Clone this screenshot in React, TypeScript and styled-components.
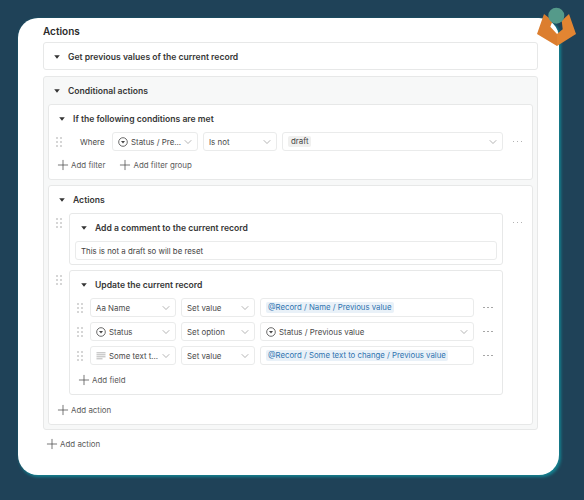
import React from "react";
import styled, { createGlobalStyle } from "styled-components";
import { ChevronDown, Plus } from "lucide-react";

const Global = createGlobalStyle`
  html, body { margin: 0; padding: 0; height: 500px; background: #1f4258; overflow: hidden; }
  body { font-family: Inter, "Liberation Sans", sans-serif; color: #333; }
  #root { padding: 18px 0 0 18px; box-sizing: border-box; }
`;

const Card = styled.main`
  position: relative;
  box-sizing: border-box;
  width: 541px;
  height: 457px;
  padding: 6px 21px 0 25px;
  background: #fff;
  border-radius: 20px;
  box-shadow: 1.5px 1.5px 3px #14808f;
`;

const Logo = styled.svg`
  position: absolute;
  left: 518px;
  top: -11px;
`;

const PageTitle = styled.h2`
  margin: 0 0 4px;
  font-size: 10px;
  line-height: 14px;
  font-weight: 600;
  color: #2b2b2b;
`;

const Stack = styled.div<{ $gap: number }>`
  display: flex;
  flex-direction: column;
  gap: ${(p) => p.$gap}px;
`;

const Panel = styled.section<{ $grey?: boolean; $inset?: boolean }>`
  box-sizing: border-box;
  background: ${(p) => (p.$grey ? "#f7f8f8" : "#fff")};
  border: 1px solid #e7e8e8;
  border-radius: 3px;
  padding: ${(p) => (p.$inset ? "0 4px 4px" : "0")};
`;

const Header = styled.div<{ $indent?: number; $short?: boolean }>`
  box-sizing: border-box;
  display: flex;
  align-items: center;
  gap: 8px;
  height: ${(p) => (p.$short ? 26 : 27)}px;
  padding-top: ${(p) => (p.$short ? 1 : 0)}px;
  padding-left: ${(p) => p.$indent ?? 10}px;
  font-size: 8.6px;
  font-weight: 600;
  color: #363636;
`;

const Row = styled.div`
  display: flex;
  align-items: center;
  height: 19px;
`;

const NestedRow = styled.div`
  display: flex;
  align-items: flex-start;
`;

const GripCell = styled.div`
  width: 20px;
  height: 19px;
  flex: none;
  display: flex;
  align-items: center;
  justify-content: center;
  color: #8d8d8d;
`;

const WhereLabel = styled.span`
  width: 43px;
  flex: none;
  box-sizing: border-box;
  padding-left: 11px;
  font-size: 7.9px;
  color: #4a4a4a;
`;

const Fields = styled.div`
  display: flex;
  gap: 5px;
  flex: none;
`;

const Field = styled.div<{ $w: number }>`
  box-sizing: border-box;
  width: ${(p) => p.$w}px;
  flex: none;
  height: 19px;
  display: flex;
  align-items: center;
  gap: 3px;
  padding: 0 5px;
  border: 1px solid #eaebeb;
  border-radius: 3px;
  background: #fff;
  font-size: 7.9px;
  color: #4a4a4a;
  white-space: nowrap;
`;

const FieldText = styled.span`
  flex: 1;
  min-width: 0;
`;

const Chevron = styled(ChevronDown)`
  flex: none;
  margin-right: -2px;
  color: #8b8b8b;
`;

const Token = styled.span`
  padding: 1px 2px;
  border-radius: 2px;
  background: #e9f1f8;
  color: #2f74b0;
  font-size: 7.8px;
  line-height: 9px;
`;

const Tag = styled.span`
  display: inline-block;
  padding: 1px 3px;
  border-radius: 2px;
  background: #f0f0ef;
  color: #444;
  font-size: 7.9px;
  line-height: 9px;
`;

const More = styled.div`
  flex: 1;
  height: 19px;
  display: flex;
  align-items: center;
  justify-content: center;
  gap: 2.3px;
  & > i { width: 1.7px; height: 1.7px; border-radius: 50%; background: #9a9a9a; display: block; }
`;

const AddRow = styled.div<{ $h: number; $pl: number }>`
  display: flex;
  align-items: center;
  gap: 15px;
  height: ${(p) => p.$h}px;
  padding-left: ${(p) => p.$pl}px;
`;

const AddButton = styled.span`
  display: inline-flex;
  align-items: center;
  gap: 3.7px;
  font-size: 7.9px;
  color: #5a5a5a;
  svg { color: #444; flex: none; margin: 0 -3.3px; }
`;

const CommentInput = styled.div`
  box-sizing: border-box;
  height: 19px;
  margin: 0 5px 4px;
  padding: 0 5px;
  display: flex;
  align-items: center;
  border: 1px solid #eaebeb;
  border-radius: 3px;
  font-size: 7.85px;
  color: #3f3f3f;
`;

const Body = styled.div`
  display: flex;
  flex-direction: column;
  gap: 5px;
`;

const NestedPanel = styled(Panel)`
  width: 434px;
  flex: none;
`;

const Caret = () => (
  <svg width="6" height="4" viewBox="0 0 6 4" style={{ flex: "none" }}>
    <path d="M0.2 0.3h5.6L3 3.8z" fill="#333" />
  </svg>
);

const Grip = () => (
  <svg width="6" height="10" viewBox="0 0 6 10" fill="currentColor">
    {[1, 5, 9].flatMap((y) => [1, 5].map((x) => <circle key={`${x}-${y}`} cx={x} cy={y} r="0.7" />))}
  </svg>
);

const StatusIcon = () => (
  <svg width="10" height="10" viewBox="0 0 10 10" style={{ flex: "none" }}>
    <circle cx="5" cy="5" r="4.3" fill="none" stroke="#444" strokeWidth="0.8" />
    <path d="M3 4h4L5 6.6z" fill="#444" />
  </svg>
);

const TextIcon = () => (
  <svg width="10" height="8" viewBox="0 0 10 8" style={{ flex: "none" }}>
    <path d="M.5 .8h9M.5 2.8h9M.5 4.8h9M.5 6.8h6" stroke="#777" strokeWidth="0.55" />
  </svg>
);

const Dots = () => (
  <More>
    <i />
    <i />
    <i />
  </More>
);

const Add = ({ label }: { label: string }) => (
  <AddButton>
    <Plus size={16} strokeWidth={1.1} />
    {label}
  </AddButton>
);

const Select = ({ w, icon, children }: { w: number; icon?: React.ReactNode; children: React.ReactNode }) => (
  <Field $w={w}>
    {icon}
    <FieldText>{children}</FieldText>
    <Chevron size={12} strokeWidth={1.3} />
  </Field>
);

type FieldRow = { icon?: React.ReactNode; name: string; action: string; token?: string; status?: string };

const fields: FieldRow[] = [
  { name: "Aa Name", action: "Set value", token: "@Record / Name / Previous value" },
  { icon: <StatusIcon />, name: "Status", action: "Set option", status: "Status / Previous value" },
  { icon: <TextIcon />, name: "Some text t...", action: "Set value", token: "@Record / Some text to change / Previous value" },
];

export default function App() {
  return (
    <>
      <Global />
      <Card>
        <Logo width="42" height="42" viewBox="0 0 42 42">
          <path d="M8 7 L1 27 L21 39 L21 27 L14.3 19.7 L16.7 13.7 Z" fill="#dc7e2f" />
          <path d="M33 7 L40 27 L21 39 L21 27 L26.7 22.3 L25.7 13.7 Z" fill="#e28532" />
          <circle cx="20.3" cy="8.7" r="8" fill="#559a8a" />
        </Logo>
        <PageTitle>Actions</PageTitle>
        <Stack $gap={6}>
          <Panel>
            <Header $short>
              <Caret />
              Get previous values of the current record
            </Header>
          </Panel>
          <Panel $grey $inset>
            <Header $indent={6}>
              <Caret />
              Conditional actions
            </Header>
            <Stack $gap={5}>
              <Panel>
                <Header>
                  <Caret />
                  If the following conditions are met
                </Header>
                <Row>
                  <GripCell>
                    <Grip />
                  </GripCell>
                  <WhereLabel>Where</WhereLabel>
                  <Fields>
                    <Select w={86} icon={<StatusIcon />}>
                      Status / Pre...
                    </Select>
                    <Select w={74}>Is not</Select>
                    <Select w={221}>
                      <Tag>draft</Tag>
                    </Select>
                  </Fields>
                  <Dots />
                </Row>
                <AddRow $h={28} $pl={9}>
                  <Add label="Add filter" />
                  <Add label="Add filter group" />
                </AddRow>
              </Panel>
              <Panel>
                <Header>
                  <Caret />
                  Actions
                </Header>
                <Body>
                  <NestedRow>
                    <GripCell>
                      <Grip />
                    </GripCell>
                    <NestedPanel>
                      <Header $indent={11}>
                        <Caret />
                        Add a comment to the current record
                      </Header>
                      <CommentInput>This is not a draft so will be reset</CommentInput>
                    </NestedPanel>
                    <Dots />
                  </NestedRow>
                  <NestedRow>
                    <GripCell>
                      <Grip />
                    </GripCell>
                    <NestedPanel>
                      <Header $indent={11}>
                        <Caret />
                        Update the current record
                      </Header>
                      <Body>
                        {fields.map((f) => (
                          <Row key={f.name}>
                            <GripCell>
                              <Grip />
                            </GripCell>
                            <Fields>
                              <Select w={86} icon={f.icon}>
                                {f.name}
                              </Select>
                              <Select w={74}>{f.action}</Select>
                              {f.token ? (
                                <Field $w={214}>
                                  <Token>{f.token}</Token>
                                </Field>
                              ) : (
                                <Select w={214} icon={<StatusIcon />}>
                                  {f.status}
                                </Select>
                              )}
                            </Fields>
                            <Dots />
                          </Row>
                        ))}
                      </Body>
                      <AddRow $h={29} $pl={9}>
                        <Add label="Add field" />
                      </AddRow>
                    </NestedPanel>
                  </NestedRow>
                </Body>
                <AddRow $h={29} $pl={9}>
                  <Add label="Add action" />
                </AddRow>
              </Panel>
            </Stack>
          </Panel>
        </Stack>
        <AddRow $h={28} $pl={4}>
          <Add label="Add action" />
        </AddRow>
      </Card>
    </>
  );
}
